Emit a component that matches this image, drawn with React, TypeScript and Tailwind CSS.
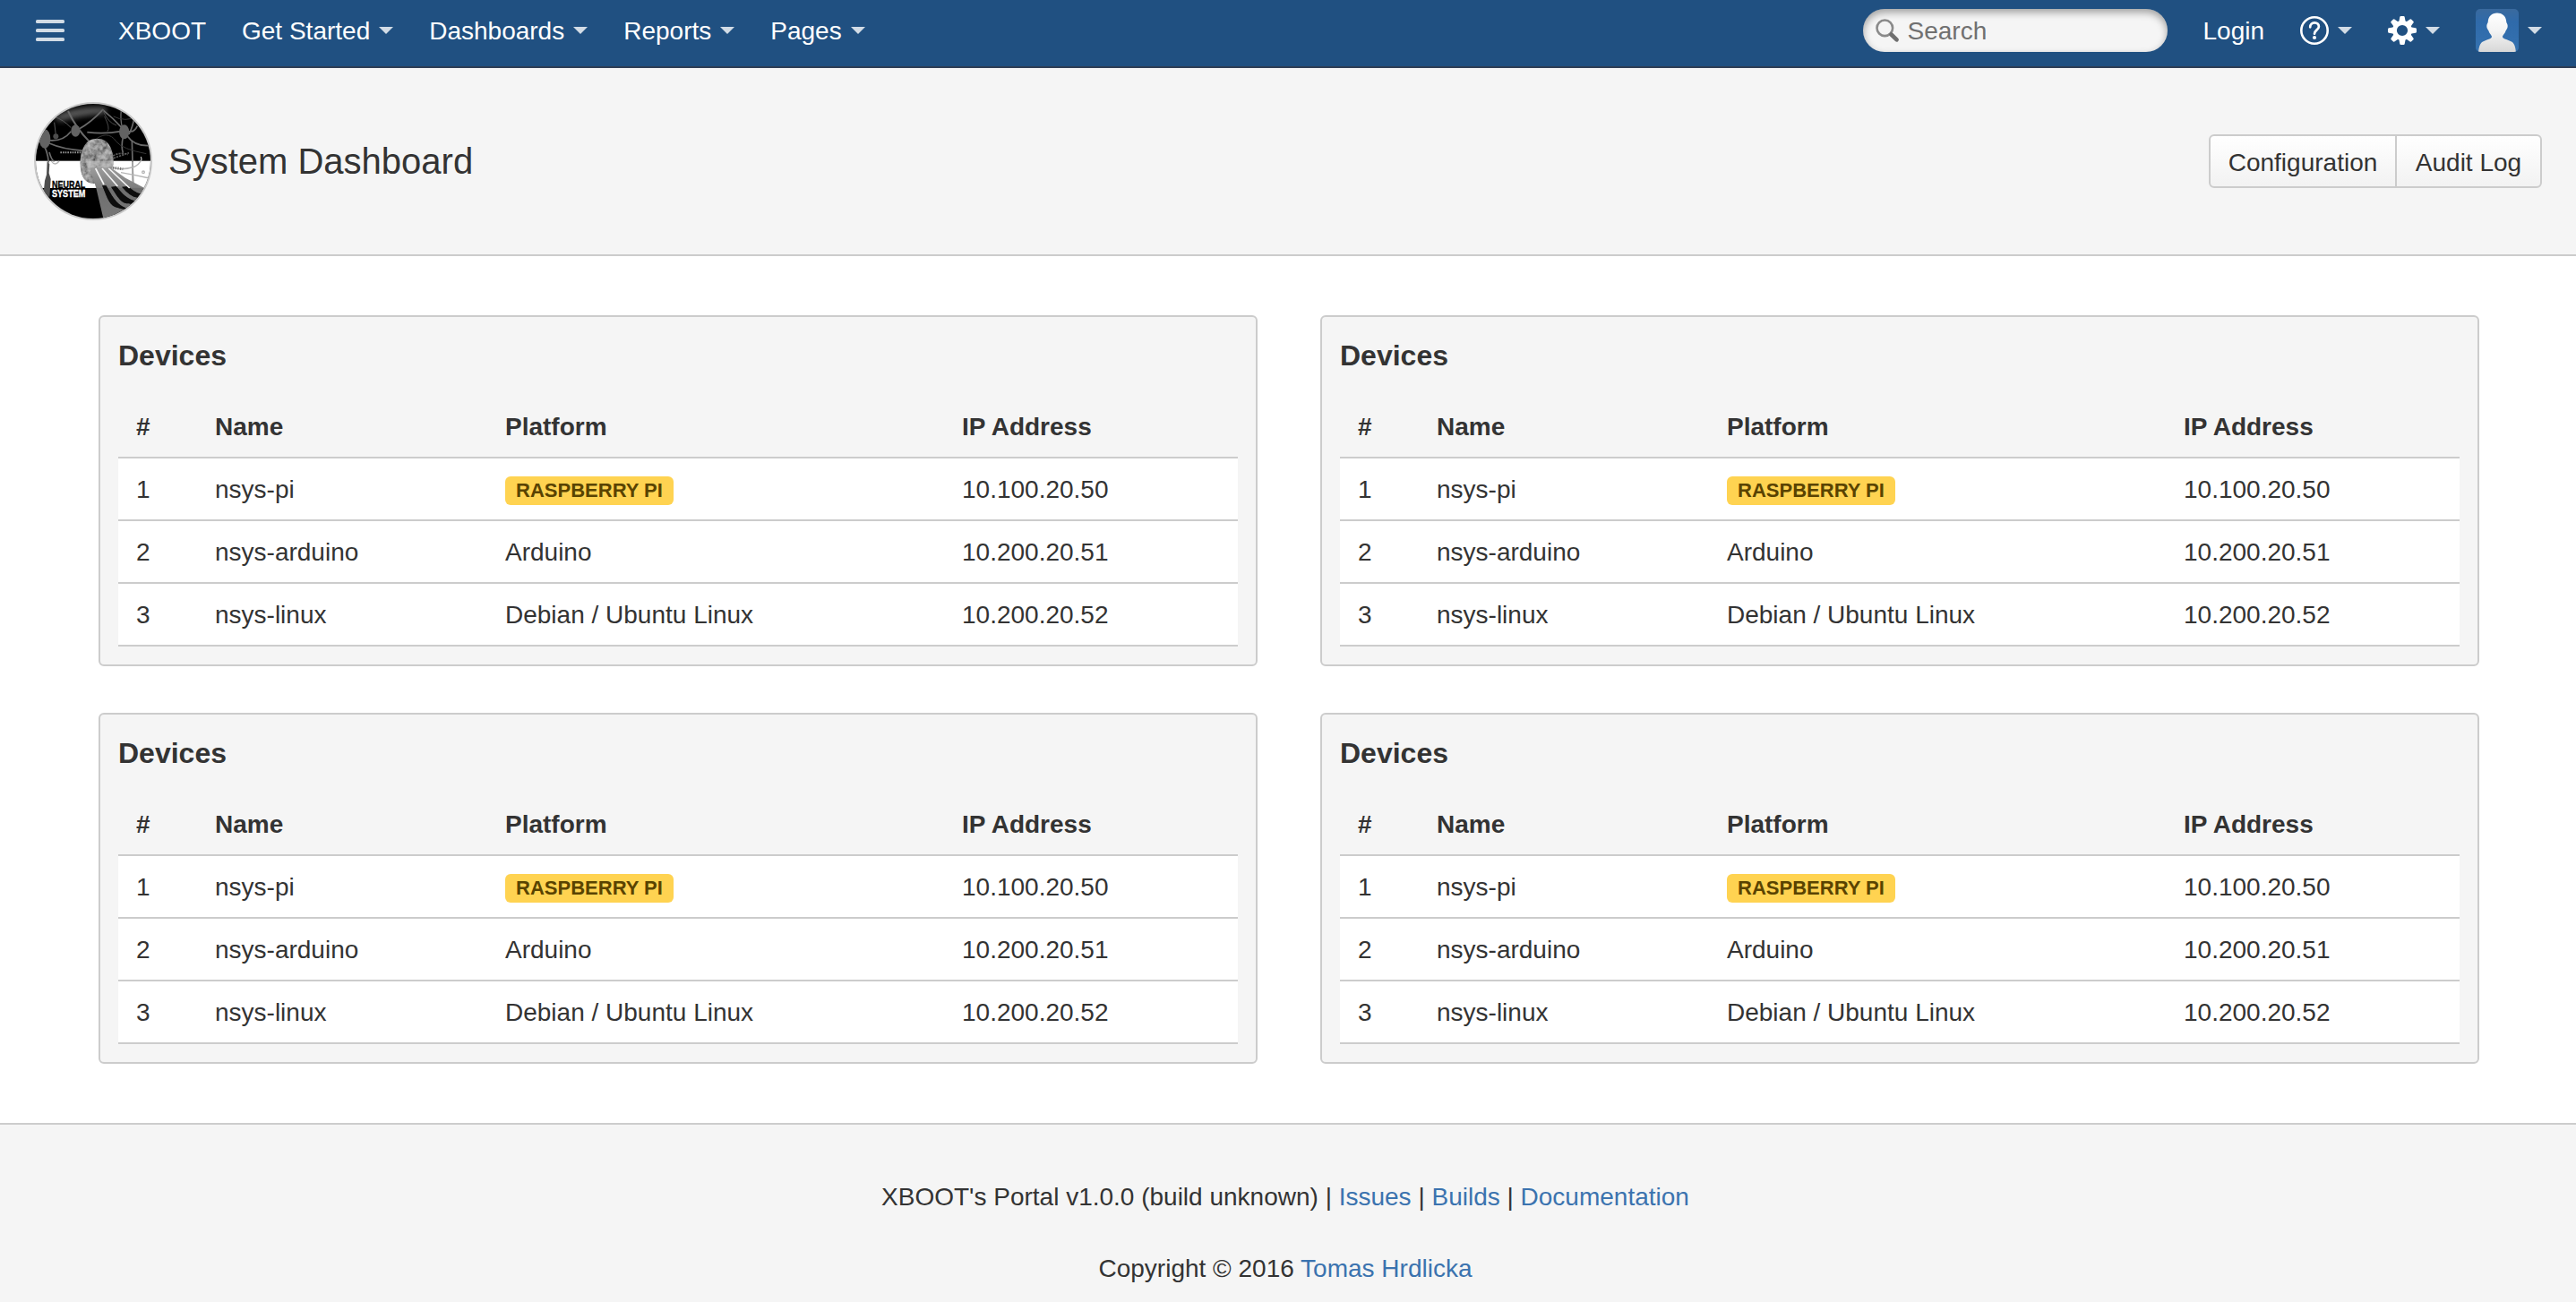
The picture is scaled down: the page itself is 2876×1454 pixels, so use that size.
import React from "react";

const rows = [
  { id: "1", name: "nsys-pi", platform: "RASPBERRY PI", badge: true, ip: "10.100.20.50" },
  { id: "2", name: "nsys-arduino", platform: "Arduino", badge: false, ip: "10.200.20.51" },
  { id: "3", name: "nsys-linux", platform: "Debian / Ubuntu Linux", badge: false, ip: "10.200.20.52" },
];

function Caret() {
  return (
    <svg className="ml-[10px] h-2 w-4 shrink-0" viewBox="0 0 16 8">
      <path d="M0 0H16L8 8Z" fill="#d2dce6" />
    </svg>
  );
}

function NavItem({ label }: { label: string }) {
  return (
    <a className="mr-10 flex items-center">
      <span className="pt-[2px] leading-8">{label}</span>
      <Caret />
    </a>
  );
}

function MenuIcon() {
  return (
    <svg className="mr-[60px] h-6 w-8" viewBox="0 0 32 24" fill="#d2dce6">
      <rect width="32" height="4" rx="1.6" />
      <rect y="10" width="32" height="4" rx="1.6" />
      <rect y="20" width="32" height="4" rx="1.6" />
    </svg>
  );
}

function SearchIcon() {
  return (
    <svg className="h-[27px] w-[27px]" viewBox="0 0 27 27" fill="none">
      <circle cx="10.3" cy="10.3" r="8.8" stroke="#8a8a8a" strokeWidth="2.6" />
      <path d="M17.500 17.500L23.600 23.400" stroke="#6e6e6e" strokeWidth="4.600" strokeLinecap="round" />
    </svg>
  );
}

function HelpIcon() {
  return (
    <svg className="h-8 w-8" viewBox="0 0 32 32" fill="none">
      <circle cx="16" cy="16" r="14.7" stroke="#fff" strokeWidth="2.6" />
      <path
        d="M11.200 12.300C11.200 9.300 13.300 7.400 16.100 7.400C18.900 7.400 20.900 9.200 20.900 11.700C20.900 15.200 16 15.600 16 19.700"
        stroke="#fff"
        strokeWidth="2.700"
        strokeLinecap="round"
      />
      <circle cx="16" cy="24" r="2.100" fill="#fff" />
    </svg>
  );
}

function GearIcon() {
  const teeth = [0, 45, 90, 135, 180, 225, 270, 315];
  return (
    <svg className="h-8 w-8" viewBox="0 0 32 32">
      <g fill="#fff">
        {teeth.map((a) => (
          <path key={a} transform={`rotate(${a} 16 16)`} d="M12.200 7L13.300 1Q13.500 0 14.500 0H17.500Q18.500 0 18.700 1L19.800 7Z" />
        ))}
      </g>
      <circle cx="16" cy="16" r="8.500" fill="none" stroke="#fff" strokeWidth="4.800" />
    </svg>
  );
}

function UserAvatar() {
  return (
    <svg className="h-12 w-12 rounded-[5px]" viewBox="0 0 48 48">
      <defs>
        <linearGradient id="avatarBg" x1="0" y1="0" x2="0" y2="1">
          <stop offset="0" stopColor="#3a6a9e" />
          <stop offset="0.3" stopColor="#2f6aaa" />
          <stop offset="1" stopColor="#3572b0" />
        </linearGradient>
        <linearGradient id="avatarFg" x1="0" y1="0" x2="0" y2="1">
          <stop offset="0" stopColor="#ffffff" />
          <stop offset="0.45" stopColor="#f4f4f4" />
          <stop offset="1" stopColor="#d6d6d6" />
        </linearGradient>
        <filter id="avatarSoft">
          <feGaussianBlur stdDeviation="0.6" />
        </filter>
      </defs>
      <rect width="48" height="48" fill="url(#avatarBg)" />
      <path
        filter="url(#avatarSoft)"
        fill="url(#avatarFg)"
        d="M24 4.500C18 4.500 14 8.500 13.800 14C13.800 16 12.300 16.500 12.300 19C12.300 22 13.800 23 14.500 24.500C15.500 28 17.800 29 18 31C18 33.500 12.500 34 8 36.500C4.500 38.500 3.500 43 3 49H45C44.500 43 43.500 38.500 40 36.500C35.500 34 30 33.500 30 31C30.200 29 32.500 28 33.500 24.500C34.200 23 35.700 22 35.700 19C35.700 16.500 34.200 16 34.200 14C34 8.500 30 4.500 24 4.500Z"
      />
    </svg>
  );
}

function ProjectLogo() {
  return (
    <svg className="h-[132px] w-[132px]" viewBox="54 42 396 396">
      <defs>
        <clipPath id="logoClip">
          <circle cx="252" cy="240" r="192" />
        </clipPath>
        <filter id="soft">
          <feGaussianBlur stdDeviation="2" />
        </filter>
        <filter id="haze" x="-0.3" y="-1" width="1.6" height="3">
          <feGaussianBlur stdDeviation="9" />
        </filter>
        <filter id="cellTexture" x="0" y="0" width="1" height="1">
          <feTurbulence type="fractalNoise" baseFrequency="0.06" numOctaves="3" seed="4" result="noise" />
          <feColorMatrix in="noise" type="matrix" values="1.4 0 0 0 -0.25  1.4 0 0 0 -0.25  1.4 0 0 0 -0.25  0 0 0 0 0.5" result="grey" />
          <feComposite in="grey" in2="SourceGraphic" operator="in" result="tex" />
          <feMerge>
            <feMergeNode in="SourceGraphic" />
            <feMergeNode in="tex" />
          </feMerge>
        </filter>
        <linearGradient id="axon" x1="0" y1="0" x2="0" y2="1">
          <stop offset="0" stopColor="#9c9c9c" />
          <stop offset="0.37" stopColor="#7e7e7e" />
          <stop offset="0.39" stopColor="#6e6e6e" />
          <stop offset="1" stopColor="#787878" />
        </linearGradient>
      </defs>
      <circle cx="252" cy="240" r="198" fill="#c8c8c8" />
      <g clipPath="url(#logoClip)">
        <rect x="54" y="42" width="396" height="396" fill="#000" />
        <path d="M120 90Q200 50 300 60L290 82Q200 88 140 108Z" fill="#5a5a5a" filter="url(#haze)" />
        <rect x="54" y="239" width="396" height="91" fill="#fff" />
        <g fill="none" stroke="#6a6a6a" strokeWidth="5" filter="url(#soft)">
          <path d="M168 72Q195 130 240 175" strokeWidth="6" />
          <path d="M205 132Q245 110 284 68Q318 95 350 130" />
          <path d="M284 68Q300 110 330 120M290 90Q310 130 300 140" strokeWidth="3" stroke="#4a4a4a" />
          <path d="M232 143Q290 150 345 140" />
          <path d="M346 70Q342 100 350 130" strokeWidth="4" />
          <path d="M370 140Q390 145 400 122M366 155Q390 190 440 188M372 150Q400 90 380 70" />
          <path d="M352 160Q345 190 352 212M382 170L386 320" />
          <path d="M105 170Q150 175 178 140M105 180Q150 200 220 205" />
          <path d="M125 92Q150 100 178 128M128 160L122 110" strokeWidth="3" stroke="#5a5a5a" />
          <path d="M80 175Q100 205 103 245M105 210Q114 240 122 240" />
          <path d="M320 230L372 212M318 222Q345 208 368 218" stroke="#5b5b5b" strokeDasharray="7 3" />
          <path d="M142 211H225" stroke="#8b8b8b" strokeWidth="6" strokeDasharray="5 3" />
          <path d="M250 175Q300 130 330 175Q350 200 430 215M320 90Q360 110 400 90" strokeWidth="3" stroke="#373737" />
        </g>
        <g fill="#636363" filter="url(#soft)">
          <ellipse cx="90" cy="165" rx="19" ry="32" />
          <ellipse cx="193" cy="138" rx="15" ry="20" />
          <ellipse cx="356" cy="142" rx="17" ry="24" />
          <circle cx="127" cy="157" r="9" fill="#4d4d4d" />
        </g>
        <g fill="none" stroke="#b5b5b5" strokeWidth="4" filter="url(#soft)">
          <path d="M320 262Q350 272 392 258Q420 240 412 225" />
          <path d="M345 278Q390 286 440 297M384 242V310" />
          <path d="M318 262L352 266" stroke="#777" strokeWidth="9" strokeDasharray="4 4" />
          <path d="M112 240Q124 258 138 240" />
          <circle cx="420" cy="277" r="4" />
        </g>
        <path d="M98 240L106 250L104 280L110 300L106 360L86 345L90 305L96 285Z" fill="#4f4f4f" filter="url(#soft)" />
        <path
          filter="url(#cellTexture)"
          fill="#6e6e6e"
          d="M262 165C240 165 226 178 217 200C208 220 207 250 212 276C216 298 230 313 252 315C285 312 316 285 320 245C321 212 310 185 295 173C283 165 272 164 262 165Z"
        />
        <path d="M232 239H318V262H232Z" fill="#c4c4c4" opacity="0.6" filter="url(#soft)" />
        <path d="M240 262H312L360 296L424 330L450 380L400 440H288L262 330Z" fill="url(#axon)" />
        <g fill="#080808" filter="url(#soft)">
          <path d="M282 322C296 352 302 384 326 394C348 402 362 400 376 408L360 396C330 386 312 352 296 322Z" />
          <path d="M312 326C330 352 340 376 364 382C384 386 398 382 414 388L400 374C368 370 350 350 330 324Z" />
          <path d="M348 326C368 348 382 360 402 362L434 362L424 350C400 350 384 338 370 324Z" />
        </g>
        <g fill="none" stroke="#f4f4f4" strokeWidth="5" filter="url(#soft)">
          <path d="M260 264L288 318M282 264L334 324M304 264L374 330" />
        </g>
        <g fontFamily="Liberation Sans, sans-serif" fontWeight="700" fontSize="31">
          <text x="114" y="330" textLength="112" lengthAdjust="spacingAndGlyphs" fill="#000" stroke="#000">
            NEURAL
          </text>
          <text x="114" y="359" textLength="112" lengthAdjust="spacingAndGlyphs" fill="#fff" stroke="#fff">
            SYSTEM
          </text>
        </g>
      </g>
    </svg>
  );
}

function DeviceCard() {
  return (
    <section className="h-[392px] rounded-[6px] border-2 border-[#ccc] bg-[#f5f5f5] px-5">
      <h2 className="pt-[23px] text-[32px] leading-[40px] font-bold">Devices</h2>
      <table className="mt-[23px] w-full table-fixed border-separate border-spacing-0">
        <colgroup>
          <col className="w-[88px]" />
          <col className="w-[324px]" />
          <col className="w-[510px]" />
          <col />
        </colgroup>
        <thead>
          <tr className="text-left">
            {["#", "Name", "Platform", "IP Address"].map((h) => (
              <th key={h} className="h-[72px] border-b-2 border-[#ccc] pt-[3px] pl-5 font-bold">
                {h}
              </th>
            ))}
          </tr>
        </thead>
        <tbody>
          {rows.map((r) => (
            <tr key={r.id} className="bg-white">
              <td className="h-[70px] border-b-2 border-[#ccc] pt-[2px] pl-5">{r.id}</td>
              <td className="h-[70px] border-b-2 border-[#ccc] pt-[2px] pl-5">{r.name}</td>
              <td className="h-[70px] border-b-2 border-[#ccc] pt-[2px] pl-5">
                {r.badge ? (
                  <span className="mt-[2px] flex h-8 w-[188px] items-center justify-center rounded-[6px] bg-[#ffd351] text-[22px] leading-8 font-bold whitespace-nowrap text-[#594300]">
                    {r.platform}
                  </span>
                ) : (
                  r.platform
                )}
              </td>
              <td className="h-[70px] border-b-2 border-[#ccc] pt-[2px] pl-5">{r.ip}</td>
            </tr>
          ))}
        </tbody>
      </table>
    </section>
  );
}

export default function App() {
  return (
    <div className="flex h-[1454px] w-full flex-col overflow-hidden bg-white font-['Liberation_Sans',Arial,sans-serif] text-[28px] leading-[40px] text-[#333]">
      <header className="flex h-[76px] shrink-0 items-center border-b-2 border-[#2e3d54] bg-[#205081] px-10 pb-[6px] text-white">
        <MenuIcon />
        <a className="mr-10 pt-[2px] leading-8">XBOOT</a>
        <NavItem label="Get Started" />
        <NavItem label="Dashboards" />
        <NavItem label="Reports" />
        <NavItem label="Pages" />
        <div className="-mr-[2px] ml-auto flex items-center">
          <div className="mr-[39px] flex h-12 w-[340px] items-center rounded-full bg-[#f5f5f5] pl-[14px] shadow-[inset_0_4px_8px_rgba(0,0,0,0.35)]">
            <SearchIcon />
            <span className="ml-2 pt-[2px] leading-8 text-[#707070]">Search</span>
          </div>
          <a className="mr-10 pt-[2px] leading-8">Login</a>
          <a className="mr-10 flex items-center">
            <HelpIcon />
            <Caret />
          </a>
          <a className="mr-10 flex items-center">
            <GearIcon />
            <Caret />
          </a>
          <a className="flex items-center">
            <UserAvatar />
            <Caret />
          </a>
        </div>
      </header>

      <div className="flex h-[210px] shrink-0 items-center border-b-2 border-[#ccc] bg-[#f5f5f5] px-[38px]">
        <ProjectLogo />
        <h1 className="ml-[18px] text-[40px] leading-[48px]">System Dashboard</h1>
        <div className="ml-auto flex h-[60px] w-[372px] rounded-[6px] border-2 border-[#ccc] bg-linear-to-b from-white to-[#f2f2f2] leading-[56px] [text-shadow:0_2px_0_#fff]">
          <button className="w-[206px] pt-[2px]">Configuration</button>
          <button className="flex-1 border-l-2 border-[#ccc] pt-[2px]">Audit Log</button>
        </div>
      </div>

      <main className="grid shrink-0 grid-cols-2 gap-x-[70px] gap-y-[52px] py-[66px] pr-[108px] pl-[110px]">
        <DeviceCard />
        <DeviceCard />
        <DeviceCard />
        <DeviceCard />
      </main>

      <footer className="flex-1 border-t-2 border-[#ccc] bg-[#f5f5f5] pt-[61px] pr-[6px] text-center">
        <p>
          XBOOT's Portal v1.0.0 (build unknown) | <a className="text-[#3b73af]">Issues</a> |{" "}
          <a className="text-[#3b73af]">Builds</a> | <a className="text-[#3b73af]">Documentation</a>
        </p>
        <p className="mt-10">
          Copyright © 2016 <a className="text-[#3b73af]">Tomas Hrdlicka</a>
        </p>
      </footer>
    </div>
  );
}
